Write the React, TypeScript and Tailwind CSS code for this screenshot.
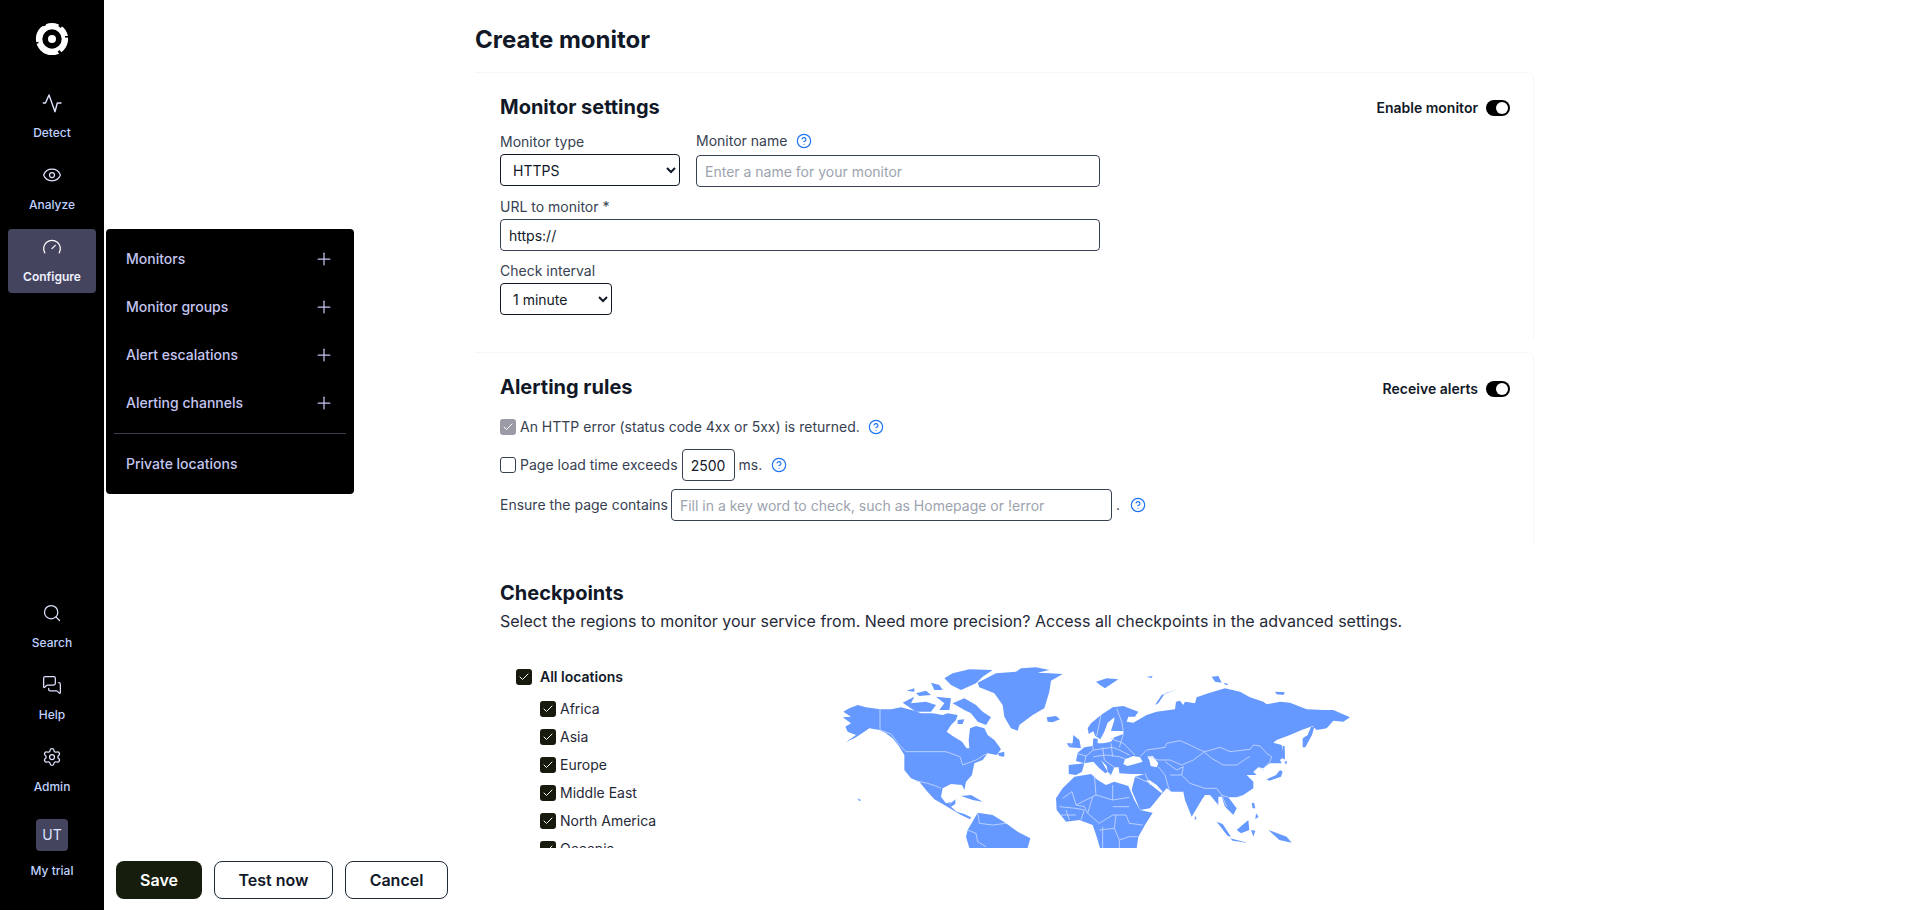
import React from 'react';
import { CircleHelp, Eye, Gauge, MessagesSquare, Plus, Search, Settings, Check } from 'lucide-react';

const land = [
  // north america
  '22,155 40,145 65,135 90,142 132,148 165,148 195,142 235,152 255,160 290,160 320,165 335,160 365,165 360,180 345,195 332,215 350,228 378,245 392,265 400,265 398,240 402,205 420,198 445,205 455,225 475,240 490,260 495,268 482,285 455,280 440,300 415,310 408,345 390,365 385,390 378,375 345,372 320,385 315,410 330,430 350,425 358,418 358,432 345,440 362,455 385,462 405,472 402,478 375,465 350,450 325,435 295,418 270,390 250,365 225,355 205,330 205,285 190,260 170,235 148,218 130,210 100,205 85,215 60,232 30,247 60,225 35,215 28,200 45,190 20,172 45,170',
  // arctic islands
  '350,130 385,115 420,135 440,155 465,172 450,195 425,185 405,160 385,150',
  '325,55 350,40 400,28 470,30 440,50 420,70 375,90 345,75',
  '200,128 235,110 225,130 270,125 300,135 285,155 240,155',
  '212,92 235,85 235,95',
  '240,100 270,92 285,105 250,108',
  '300,110 345,115 340,150 310,150 325,130',
  '285,68 310,75 320,90 295,90',
  '365,180 385,178 380,192 365,192',
  '485,280 505,275 505,290 490,288',
  '425,68 480,40 540,35 555,25 600,22 640,30 605,38 640,40 680,42 645,62 640,95 625,145 590,165 550,195 545,212 525,205 505,170 500,135 475,100 430,82',
  '632,172 660,168 672,178 650,187 635,185',
  '375,408 405,405 440,425 410,420',
  '64,415 75,420 70,424',
  // south america
  '395,510 425,458 470,465 510,490 545,515 583,535 575,564 400,564 390,530',
  // africa
  '660,415 680,385 715,350 765,342 785,360 810,375 835,365 877,378 895,420 912,450 950,458 927,495 907,530 902,564 792,564 782,530 770,495 730,480 690,485 662,450',
  // europe bits
  '698,315 745,310 738,335 720,345 698,342',
  '712,225 730,240 735,265 700,262 710,248',
  '692,250 708,250 700,262',
  // eurasia
  '725,278 745,262 770,258 772,235 785,236 785,250 800,250 825,245 835,232 862,222 862,213 825,213 835,180 835,172 815,188 805,215 793,238 778,228 772,214 758,222 755,205 765,190 795,165 830,142 862,138 907,155 897,170 877,170 872,185 892,188 932,165 962,155 1017,148 1020,125 1032,122 1042,135 1047,125 1077,130 1082,112 1117,100 1167,85 1212,95 1242,112 1282,125 1292,133 1332,125 1362,128 1412,148 1462,150 1492,150 1542,172 1522,185 1492,182 1472,205 1442,210 1430,198 1397,210 1362,225 1322,240 1312,248 1337,255 1344,290 1332,300 1337,310 1302,310 1282,325 1267,322 1252,335 1262,345 1232,345 1252,365 1252,385 1222,405 1202,412 1177,412 1202,445 1192,465 1167,440 1157,410 1147,410 1147,435 1122,405 1107,405 1097,420 1067,470 1047,420 1042,395 1007,395 992,385 977,402 942,445 912,450 887,390 897,350 925,342 885,342 850,340 848,322 835,322 825,345 815,335 812,318 795,300 815,335 808,340 790,325 772,305 745,310 720,303',
  '1425,200 1435,200 1428,225 1408,262 1400,262 1400,235 1415,225',
  '1292,358 1320,345 1332,330 1340,335 1335,350 1300,362',
  '1345,305 1354,303 1350,314',
  '1340,258 1346,258 1347,298 1340,296',
  '1077,468 1082,475 1076,480',
  '1142,485 1160,492 1185,530 1175,528',
  '1202,510 1237,480 1240,510 1215,520',
  '1245,510 1258,512 1252,530',
  '1182,535 1235,548 1190,542',
  '1297,510 1352,530 1367,548 1330,540',
  '1247,430 1254,428 1258,445 1250,445',
  '1260,460 1268,470 1258,478',
  '957,135 977,105 1024,88 987,100 967,130',
  '780,65 812,55 847,58 807,85 792,75',
  '932,50 950,48 946,54',
  '1127,50 1147,48 1157,68 1137,65',
  '1162,68 1178,72 1170,76',
  '1317,95 1347,97 1342,105 1322,103',
];

// seas drawn over the land, coordinates of the eastern half
const seas = [
  '105,298 130,288 150,292 158,305 135,312 112,318 100,312',
  '172,290 188,288 205,310 200,322 182,318 178,300',
  '168,362 190,380 215,400 218,395 200,375 178,360',
];

const borders = [
  '132,148 132,210 165,222 190,255 210,275 330,275 372,290 380,315 420,300 445,285 455,280',
  '238,362 275,370 305,380 315,385',
  '340,432 350,425',
  '425,458 430,490 470,495 510,490',
  '395,510 420,520 425,545 450,560',
  '680,415 708,395 720,435 780,405 775,345',
  '780,405 830,420 830,375',
  '830,420 880,412',
  '830,440 880,440',
  '670,440 720,445 745,450 735,480',
  '720,435 745,440 755,460 770,410',
  '755,460 790,490 830,465 870,465 880,490 920,495',
  '840,465 835,505 790,510',
  '800,500 800,564',
  '835,505 850,540 880,530 905,530',
  '850,540 850,564',
  '690,450 700,480',
  '675,465 720,465',
  '722,280 750,288 772,270 770,258',
  '750,288 745,310',
  '772,270 830,262 850,270 880,285',
  '772,290 810,285 850,290 870,298',
  '800,262 805,300 835,322',
  '825,250 830,290',
  '862,222 850,262',
  '795,165 790,190 782,228',
];

const bordersEast = [
  '150,290 170,270 225,262 230,250 270,242 300,255 330,270 345,275 390,262 420,275 480,268 490,255 510,258 530,280 545,290 540,305 520,325',
  '345,278 365,295 400,315 440,315 470,295 480,290',
  '175,290 205,300 240,300 275,315 310,300 330,285 345,275',
  '205,320 225,345 235,380 240,395',
  '225,305 260,330 280,320',
  '280,320 275,345 300,370 345,385 380,385 395,405 415,412',
  '240,345 275,345',
  '165,340 180,375',
  '135,350 170,365',
  '395,405 410,440',
  '80,145 95,185 100,212',
  '60,235 100,250 135,285',
  '508,322 522,332',
];

function WorldMap() {
  return (
    <svg viewBox="0 0 1572 564" className="w-[524px] h-[188px] shrink-0">
      <g fill="#6699ff">
        {land.map((p) => (
          <polygon key={p} points={p} />
        ))}
      </g>
      <g fill="none" stroke="#c9d8ff" strokeWidth={2.5} strokeLinejoin="round">
        {borders.map((p) => (
          <polyline key={p} points={p} />
        ))}
      </g>
      <g transform="translate(762,0)">
        <g fill="#ffffff">
          {seas.map((p) => (
            <polygon key={p} points={p} />
          ))}
        </g>
        <g fill="none" stroke="#c9d8ff" strokeWidth={2.5} strokeLinejoin="round">
          {bordersEast.map((p) => (
            <polyline key={p} points={p} />
          ))}
        </g>
      </g>
    </svg>
  );
}

const Logo = () => (
  <svg width="34" height="34" viewBox="0 0 34 34" className="block">
    <circle cx="17" cy="17" r="12.9" fill="none" stroke="#fff" strokeWidth="6.4" />
    <circle cx="17" cy="17" r="4" fill="#fff" />
    <g fill="#000">
      <rect x="24.5" y="0.5" width="3" height="5" transform="rotate(38 26 3)" />
      <rect x="30" y="14" width="4" height="1.6" />
      <rect x="7.5" y="0" width="3" height="4" transform="rotate(-28 9 2)" />
      <rect x="0" y="20" width="3.5" height="1.6" transform="rotate(-15 2 20.8)" />
      <rect x="24" y="28.5" width="2.5" height="5" transform="rotate(-40 25 31)" />
    </g>
  </svg>
);

const Pulse = () => (
  <svg width="20" height="20" viewBox="0 0 20 20" fill="none" stroke="currentColor" strokeWidth="1.4" strokeLinejoin="round" strokeLinecap="round">
    <path d="M1.3 10H3.5L7 2l6 16.7L15.3 10H19" />
  </svg>
);

function NavItem({ icon, label, active }: { icon: React.ReactNode; label: string; active?: boolean }) {
  return (
    <div
      className={`mx-2 w-[88px] h-16 rounded-[4px] pt-2 flex flex-col items-center ${
        active ? 'bg-[#45445f] text-white' : 'text-[#dfe3ff]'
      }`}
    >
      <div className="h-5 flex items-center justify-center">{icon}</div>
      <div className={`mt-3 text-xs leading-4 ${active ? 'font-semibold text-[#eef1ff]' : 'font-medium text-[#bfd0ff]'}`}>{label}</div>
    </div>
  );
}

function Sidebar() {
  return (
    <div className="w-[104px] shrink-0 bg-black flex flex-col justify-between pb-[23px]">
      <div>
        <div className="h-[85px] flex justify-center pt-[22px]">
          <Logo />
        </div>
        <div className="flex flex-col gap-2">
          <NavItem icon={<Pulse />} label="Detect" />
          <NavItem icon={<Eye size={20} strokeWidth={1.5} />} label="Analyze" />
          <NavItem icon={<Gauge size={20} strokeWidth={1.5} />} label="Configure" active />
        </div>
      </div>
      <div className="flex flex-col gap-2">
        <NavItem icon={<Search size={20} strokeWidth={1.5} />} label="Search" />
        <NavItem icon={<MessagesSquare size={20} strokeWidth={1.5} />} label="Help" />
        <NavItem icon={<Settings size={20} strokeWidth={1.5} />} label="Admin" />
        <div className="mx-2 w-[88px] pt-2 pb-2 flex flex-col items-center">
          <div className="w-8 h-8 rounded-[4px] bg-[#45445f] flex items-center justify-center text-sm text-[#dfe3ff]">UT</div>
          <div className="mt-3 text-xs leading-4 font-medium text-[#bfd0ff]">My trial</div>
        </div>
      </div>
    </div>
  );
}

function Flyout() {
  return (
    <div className="absolute left-[2px] top-[229px] w-[248px] h-[265px] bg-black rounded-[4px] pt-[6px] px-2 text-sm font-medium text-[#c4c6f0]">
      {['Monitors', 'Monitor groups', 'Alert escalations', 'Alerting channels'].map((item) => (
        <div key={item} className="h-12 px-3 flex items-center justify-between">
          <span>{item}</span>
          <Plus size={20} strokeWidth={1.5} />
        </div>
      ))}
      <div className="mt-[6px] h-px bg-[#3d3d55]" />
      <div className="mt-[6px] h-12 px-3 flex items-center">Private locations</div>
    </div>
  );
}

const Help = () => <CircleHelp size={16} strokeWidth={1.75} className="text-[#1f73f1] shrink-0" />;

function Box({ disabled }: { disabled?: boolean }) {
  return (
    <span className={`w-4 h-4 shrink-0 rounded-[3px] flex items-center justify-center ${disabled ? 'bg-[#9a9ba6]' : 'bg-[#161b0e]'}`}>
      <Check size={12} strokeWidth={2} className="text-white" />
    </span>
  );
}

function Toggle({ label, className }: { label: string; className: string }) {
  return (
    <div className={`absolute right-[23px] flex items-center gap-2 ${className}`}>
      <span className="text-sm font-semibold text-[#111827]">{label}</span>
      <span className="w-6 h-4 rounded-full bg-black flex items-center justify-end pr-[2px]">
        <span className="w-3 h-3 rounded-full bg-white" />
      </span>
    </div>
  );
}

const inputCls =
  'h-8 rounded-[4px] border border-[#374151] bg-white px-2 text-sm text-[#111827] placeholder:text-[#9ca3af] outline-none';
const selectCls = 'block h-8 rounded-[4px] border border-[#111827] bg-white text-sm text-[#111827] pl-2';
const locations = ['Africa', 'Asia', 'Europe', 'Middle East', 'North America', 'Oceania', 'South America'];

export default function App() {
  return (
    <div className="flex h-screen w-full overflow-hidden bg-white text-[#374151] font-['Inter',sans-serif]">
      <Sidebar />
      <div className="relative flex-1 flex flex-col min-w-0">
        <div className="flex-1 min-h-0 overflow-hidden">
          <div className="ml-[371px] w-[1059px]">
            <h1 className="pt-[24px] mb-[16px] text-2xl leading-8 font-bold text-[#111827]">Create monitor</h1>

            <section className="relative mb-[14px] border-t border-r border-dotted border-[#eceefc] rounded-tr-md pl-[25px] pt-5 pb-[23px]">
              <h2 className="text-xl leading-7 font-bold text-[#111827]">Monitor settings</h2>
              <Toggle label="Enable monitor" className="top-[25px]" />
              <div className="mt-[10px] flex gap-[16px]">
                <div className="pt-px">
                  <div className="text-sm leading-5 mb-[2px]">Monitor type</div>
                  <select className={`${selectCls} w-[180px]`} defaultValue="HTTPS">
                    <option>HTTPS</option>
                  </select>
                </div>
                <div>
                  <div className="text-sm leading-5 mb-1 flex items-center gap-[9px]">
                    Monitor name <Help />
                  </div>
                  <input className={`${inputCls} w-[404px] block`} placeholder="Enter a name for your monitor" />
                </div>
              </div>
              <div className="mt-[10px] text-sm leading-5 mb-[2px]">URL to monitor *</div>
              <input className={`${inputCls} w-[600px] block`} defaultValue="https://" />
              <div className="mt-[10px] text-sm leading-5 mb-[2px]">Check interval</div>
              <select className={`${selectCls} w-[112px]`} defaultValue="1 minute">
                <option>1 minute</option>
              </select>
            </section>

            <section className="relative mb-[14px] border-t border-r border-dotted border-[#eceefc] rounded-tr-md pl-[25px] pt-5 pb-[23px]">
              <h2 className="text-xl leading-7 font-bold text-[#111827]">Alerting rules</h2>
              <Toggle label="Receive alerts" className="top-[26px]" />
              <div className="mt-4 h-5 flex items-center text-sm">
                <Box disabled />
                <span className="ml-1">An HTTP error (status code 4xx or 5xx) is returned.</span>
                <span className="ml-2"><Help /></span>
              </div>
              <div className="mt-3 flex items-center gap-1 text-sm">
                <span className="w-4 h-4 shrink-0 rounded-[3px] border border-[#374151] bg-white" />
                <span>Page load time exceeds</span>
                <input className={`${inputCls} w-[53px] px-2 text-center`} defaultValue="2500" />
                <span>ms.</span>
                <span className="ml-[5px]"><Help /></span>
              </div>
              <div className="mt-2 flex items-center gap-1 text-sm">
                <span className="mr-[-1px]">Ensure the page contains</span>
                <input className={`${inputCls} w-[441px]`} placeholder="Fill in a key word to check, such as Homepage or !error" />
                <span>.</span>
                <span className="ml-[6px]"><Help /></span>
              </div>
            </section>

            <section className="pl-[25px] pt-[21px]">
              <h2 className="text-xl leading-7 font-bold text-[#111827]">Checkpoints</h2>
              <p className="mt-[2px] text-base leading-6 text-[#1f2937]">
                Select the regions to monitor your service from. Need more precision? Access all checkpoints in the advanced settings.
              </p>
              <div className="mt-[27px] flex items-start -ml-[25px]">
                <div className="w-[361px] shrink-0 pl-[41px] pt-[3px] text-sm text-[#1f2937]">
                  <div className="h-7 flex items-center gap-2 font-semibold text-[#111827]">
                    <Box />
                    All locations
                  </div>
                  <div className="mt-1">
                    {locations.map((loc) => (
                      <div key={loc} className="h-7 pl-6 flex items-center gap-1">
                        <Box />
                        {loc}
                      </div>
                    ))}
                  </div>
                </div>
                <WorldMap />
              </div>
            </section>
          </div>
        </div>

        <div className="h-[62px] shrink-0 pl-3 pt-[13px] flex gap-3 text-base font-semibold text-[#111827] bg-white">
          <button className="w-[86px] h-[38px] rounded-lg bg-[#161d0c] text-white">Save</button>
          <button className="w-[119px] h-[38px] rounded-lg border border-[#1f2937] bg-white">Test now</button>
          <button className="w-[103px] h-[38px] rounded-lg border border-[#1f2937] bg-white">Cancel</button>
        </div>
        <Flyout />
      </div>
    </div>
  );
}
